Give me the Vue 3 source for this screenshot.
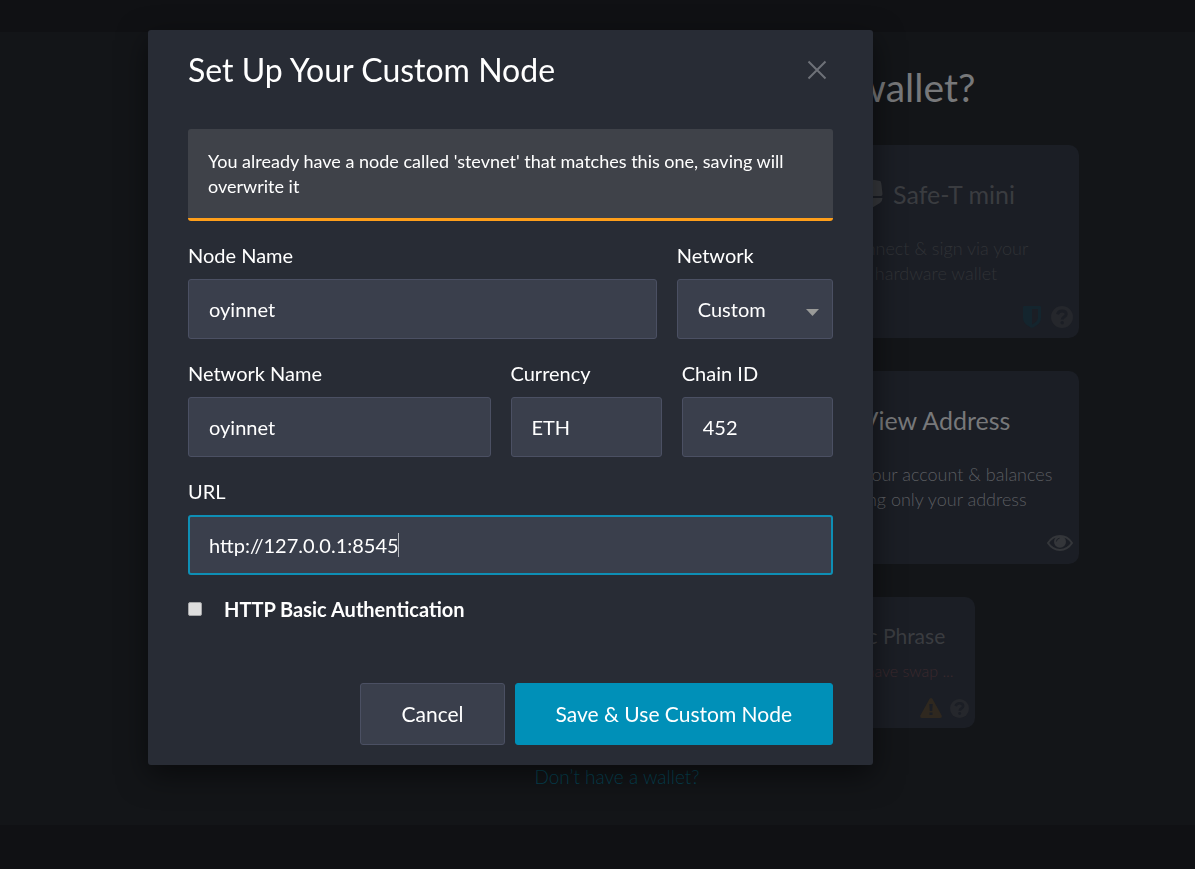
<script setup>
import { ref } from 'vue'

const nodeName = ref('oyinnet')
const network = ref('Custom')
const networkName = ref('oyinnet')
const currency = ref('ETH')
const chainId = ref('452')
const url = ref('http://127.0.0.1:8545')
const basicAuth = ref(false)
</script>

<template>
  <div class="page">
    <header class="topbar"></header>
    <main class="content">
      <h1 class="heading">How would you like to access your wallet?</h1>
      <section class="cards">
        <article class="card card-disabled">
          <h2 class="card-title">
            <svg class="safe" viewBox="0 0 26 30" aria-hidden="true">
              <path d="M2 2Q13-1 23 2Q24 2 24.500 6L25.500 15Q25.500 17 24 17H2Q.5 17 .5 15Z" />
              <path d="M.5 19H25.500Q25.500 22 23 24L13 30L3 24Q.5 22 .5 19Z" />
            </svg>
            <span>Safe-T mini</span>
          </h2>
          <p class="card-text">Connect &amp; sign via your<br />hardware wallet</p>
          <div class="card-icons">
            <svg class="shield" viewBox="0 0 18 22" aria-hidden="true">
              <path fill-rule="evenodd" d="M1 0H17Q18 0 18 1V12C18 17 13.500 20 9 22C4.500 20 0 17 0 12V1Q0 0 1 0ZM9 3V18.500C12.500 16.700 15 14.500 15 11.500V3Z" />
            </svg>
            <svg class="help" viewBox="0 0 22 22" aria-hidden="true">
              <circle cx="11" cy="11" r="11" />
              <path class="mark" d="M6.500 8.200C7.200 5.900 8.800 4.900 11.200 4.900C13.600 4.900 15.200 6.200 15.200 8.300C15.200 10.800 11.300 10.800 11.300 13.500" />
              <circle class="dot" cx="11.200" cy="16.700" r="1.700" />
            </svg>
          </div>
        </article>
        <article class="card">
          <h2 class="card-title">View Address</h2>
          <p class="card-text">View your account &amp; balances<br />using only your address</p>
          <div class="card-icons">
            <svg class="eye" viewBox="0 0 26 16" aria-hidden="true">
              <path class="lid" d="M1 8C4 3.500 8 1.100 13 1.100S22 3.500 25 8C22 12.500 18 14.900 13 14.900S4 12.500 1 8Z" />
              <circle cx="13" cy="6.800" r="6" />
              <path class="glint" d="M9.400 6.500Q9.600 3.500 12.600 3.200" />
            </svg>
          </div>
        </article>
      </section>
      <section class="cards-small">
        <article class="card card-small card-disabled">
          <h2 class="card-title">Mnemonic Phrase</h2>
          <p class="card-text danger">Some wallets have swap ...</p>
          <div class="card-icons">
            <svg class="warn" viewBox="0 0 22 20" aria-hidden="true">
              <path fill-rule="evenodd" d="M9.600 .8Q11-.8 12.400 .8L21.700 17.600Q22.300 20 20 20H2Q-.3 20 .3 17.600ZM9.300 6L9.800 13H12.200L12.700 6ZM9.500 14.400V17H12.500V14.400Z" />
            </svg>
            <svg class="help" viewBox="0 0 22 22" aria-hidden="true">
              <circle cx="11" cy="11" r="11" />
              <path class="mark" d="M6.500 8.200C7.200 5.900 8.800 4.900 11.200 4.900C13.600 4.900 15.200 6.200 15.200 8.300C15.200 10.800 11.300 10.800 11.300 13.500" />
              <circle class="dot" cx="11.200" cy="16.700" r="1.700" />
            </svg>
          </div>
        </article>
      </section>
      <a class="no-wallet" href="#">Don’t have a wallet?</a>
    </main>
    <footer class="bottombar"></footer>
  </div>

  <div class="overlay">
    <form class="modal" role="dialog" aria-labelledby="dialog-title" @submit.prevent>
      <div class="modal-header">
        <h2 id="dialog-title" class="modal-title">Set Up Your Custom Node</h2>
        <button class="close" type="button" aria-label="Close">
          <svg viewBox="0 0 20 20" aria-hidden="true"><path d="M1.500 1.500L18.500 18.500M18.500 1.500L1.500 18.500" /></svg>
        </button>
      </div>

      <p class="alert" role="alert">
        You already have a node called 'stevnet' that matches this one, saving will overwrite it
      </p>

      <div class="row">
        <label class="field span-3">
          <span class="label">Node Name</span>
          <input v-model="nodeName" class="control" type="text" />
        </label>
        <label class="field">
          <span class="label">Network</span>
          <span class="control-wrap">
            <select v-model="network" class="control select">
              <option>Custom</option>
            </select>
            <svg class="arrow" viewBox="0 0 13 7" aria-hidden="true"><path d="M0 0H13L6.500 7Z" /></svg>
          </span>
        </label>
      </div>

      <div class="row">
        <label class="field span-2">
          <span class="label">Network Name</span>
          <input v-model="networkName" class="control" type="text" />
        </label>
        <label class="field">
          <span class="label">Currency</span>
          <input v-model="currency" class="control" type="text" />
        </label>
        <label class="field">
          <span class="label">Chain ID</span>
          <input v-model="chainId" class="control" type="text" />
        </label>
      </div>

      <div class="row">
        <label class="field">
          <span class="label">URL</span>
          <span class="control-wrap">
            <input v-model="url" class="control active" type="text" />
            <span class="caret"></span>
          </span>
        </label>
      </div>

      <label class="check">
        <input v-model="basicAuth" type="checkbox" />
        <span>HTTP Basic Authentication</span>
      </label>

      <div class="actions">
        <button class="btn" type="button">Cancel</button>
        <button class="btn primary" type="submit">Save &amp; Use Custom Node</button>
      </div>
    </form>
  </div>
</template>

<style>
body {
  background: #101114;
}
</style>

<style scoped>
* {
  box-sizing: border-box;
}

.page,
.overlay {
  font-family: Lato, "Open Sans", sans-serif;
}

.page {
  display: flex;
  flex-direction: column;
  min-height: 100vh;
  background: #131518;
}

.topbar {
  height: 32px;
  background: #101114;
}

.content {
  flex: 1;
  display: flex;
  flex-direction: column;
  align-items: center;
  padding: 30px 0 0 39px;
}

.bottombar {
  height: 44px;
  background: #101114;
}

.heading {
  margin: 0 0 33px;
  font-size: 39px;
  font-weight: 400;
  line-height: 50px;
  color: #77787a;
}

.cards {
  width: 924px;
  display: grid;
  grid-template-columns: repeat(3, 1fr);
  gap: 33px;
}

.cards .card {
  grid-column: 3;
}

.cards-small {
  width: 716px;
  display: grid;
  grid-template-columns: repeat(3, 1fr);
  gap: 20px;
  margin: 33px 0 37px;
}

.card {
  height: 193px;
  display: flex;
  flex-direction: column;
  padding: 32px 6px 10px;
  border-radius: 10px;
  background: #1b1e25;
  text-align: center;
}

.card-title {
  display: flex;
  align-items: center;
  justify-content: center;
  gap: 10px;
  margin: 0 0 25px;
  font-size: 25px;
  font-weight: 400;
  line-height: 34px;
  color: #77787a;
}

.card-text {
  margin: 0;
  font-size: 18px;
  font-weight: 300;
  line-height: 25px;
  color: #5a5c60;
}

.card-icons {
  display: flex;
  align-items: center;
  justify-content: flex-end;
  gap: 10px;
  height: 22px;
  margin-top: auto;
  fill: #34363a;
}

.card-disabled .card-title {
  color: #3a3c40;
  fill: #36383c;
}

.card-disabled .card-text {
  color: #303236;
}

.card-disabled .card-icons {
  fill: #25272c;
}

.card-small {
  grid-column: 3;
  height: 131px;
  padding: 25px 6px 9px;
}

.card-small .card-title {
  margin-bottom: 8px;
  font-size: 21px;
  line-height: 28px;
}

.card-small .card-text.danger {
  font-size: 16px;
  line-height: 25px;
  color: #3c292e;
}

.card-small .card-icons {
  gap: 8px;
}

.card-disabled .shield {
  fill: #14252e;
}

.card-disabled .warn {
  fill: #2f281f;
}

.safe {
  width: 26px;
  height: 30px;
}

.shield {
  width: 18px;
  height: 22px;
}

.help {
  width: 22px;
  height: 22px;
}

.card-small .help {
  width: 19px;
  height: 19px;
}

.mark {
  fill: none;
  stroke: #1b1e25;
  stroke-width: 3;
}

.dot {
  fill: #1b1e25;
}

.eye {
  width: 26px;
  height: 16px;
}

.lid {
  fill: none;
  stroke: #34363a;
  stroke-width: 2;
}

.glint {
  fill: none;
  stroke: #1b1e25;
  stroke-width: 1;
}

.warn {
  width: 22px;
  height: 20px;
}

.no-wallet {
  font-size: 19px;
  font-weight: 300;
  line-height: 24px;
  color: #064354;
  text-decoration: none;
}

.overlay {
  position: fixed;
  inset: 0;
  padding: 30px 20px 30px 148px;
  overflow: auto;
}

.modal {
  max-width: 725px;
  padding: 20px 40px;
  border-radius: 3px;
  background: #282c35;
  box-shadow: 0 10px 30px rgba(0, 0, 0, 0.5);
  color: #fff;
}

.modal-header {
  display: flex;
  align-items: center;
  justify-content: space-between;
  height: 40px;
  margin-bottom: 39px;
}

.modal-title {
  margin: 0;
  font-size: 32px;
  font-weight: 400;
  line-height: 40px;
}

.close {
  display: flex;
  padding: 6px;
  border: 0;
  background: none;
}

.close svg {
  width: 20px;
  height: 20px;
  fill: none;
  stroke: #6e7178;
  stroke-width: 2;
}

.alert {
  margin: 0 0 20px;
  padding: 20px 20px 19px;
  border-bottom: 3px solid #ff9f1a;
  border-radius: 3px;
  background: #3f4249;
  font-size: 18px;
  line-height: 25px;
}

.row {
  display: flex;
  gap: 20px;
  margin-bottom: 20px;
}

.field {
  flex: 1 1 0;
  min-width: 0;
  display: flex;
  flex-direction: column;
  gap: 10px;
}

.span-2 {
  flex: 2 1 0;
}

.span-3 {
  flex: 3 1 0;
}

.label {
  font-size: 20px;
  line-height: 28px;
}

.control-wrap {
  position: relative;
  display: block;
}

.control {
  display: block;
  width: 100%;
  height: 60px;
  padding: 0 20px;
  border: 1px solid #4b5063;
  border-radius: 3px;
  outline: 0;
  background: #3a3f4c;
  font: 400 20px Lato, "Open Sans", sans-serif;
  color: #fff;
}

.select {
  appearance: none;
}

.arrow {
  position: absolute;
  top: 30px;
  right: 14px;
  width: 13px;
  height: 7px;
  fill: #999a98;
  pointer-events: none;
}

.active {
  padding: 0 19px;
  border: 2px solid #0e8fb5;
}

.caret {
  position: absolute;
  top: 18px;
  left: 210px;
  width: 1px;
  height: 24px;
  background: #b5b7bd;
}

.check {
  display: flex;
  align-items: center;
  gap: 22px;
  height: 28px;
  font-size: 20px;
  font-weight: 700;
}

.check input {
  appearance: none;
  width: 14px;
  height: 14px;
  margin: 0;
  border: 1px solid #a5a6a8;
  border-radius: 2px;
  background: #dedede;
}

.actions {
  display: flex;
  justify-content: flex-end;
  gap: 10px;
  margin-top: 60px;
}

.btn {
  height: 62px;
  padding: 0 40px 2px;
  border: 1px solid #4b5063;
  border-radius: 3px;
  background: #3a3f4c;
  font: 400 21px Lato, "Open Sans", sans-serif;
  color: #fff;
}

.primary {
  border-color: #0090b8;
  background: #0090b8;
}
</style>
